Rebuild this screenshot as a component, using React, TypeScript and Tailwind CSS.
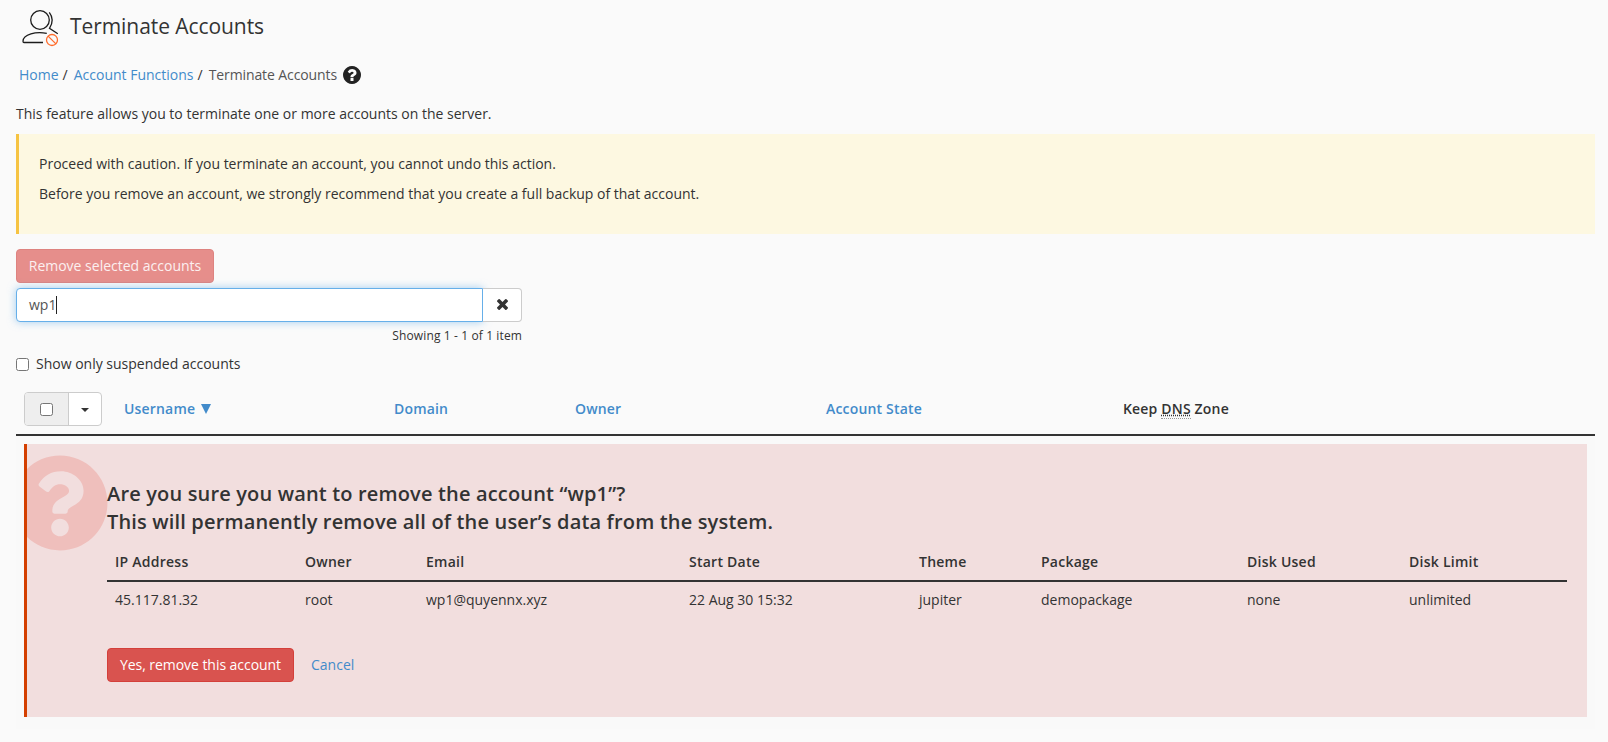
import React from "react";
import { FaQuestionCircle } from "react-icons/fa";

const columns = [
  { label: "IP Address", value: "45.117.81.32", width: "w-[190px]" },
  { label: "Owner", value: "root", width: "w-[121px]" },
  { label: "Email", value: "wp1@quyennx.xyz", width: "w-[263px]" },
  { label: "Start Date", value: "22 Aug 30 15:32", width: "w-[230px]" },
  { label: "Theme", value: "jupiter", width: "w-[122px]" },
  { label: "Package", value: "demopackage", width: "w-[206px]" },
  { label: "Disk Used", value: "none", width: "w-[162px]" },
  { label: "Disk Limit", value: "unlimited", width: "w-[150px]" },
];

function TerminateIcon() {
  return (
    <svg width="38" height="40" viewBox="0 0 38 40" fill="none" strokeWidth="1.3" stroke="#1c1c1c">
      <circle cx="18" cy="12" r="9.3" />
      <path d="M27.3 4.300c3.800 5 3.400 11 .2 16l8.300 5.400" />
      <path d="M24.800 25.300C14 23.300 1.200 26 1 33.200q0 1.300 1 1.300h19" />
      <g stroke="#ff6c2c" strokeWidth="1.3">
        <circle cx="30" cy="32" r="5.500" />
        <path d="M26.100 28.100l7.800 7.800" />
      </g>
    </svg>
  );
}

function HelpIcon() {
  return (
    <svg className="ml-[6px]" width="18" height="18" viewBox="0 128 1536 1536" fill="#222">
      <path d="M896 1376v-192q0-14-9-23t-23-9h-192q-14 0-23 9t-9 23v192q0 14 9 23t23 9h192q14 0 23-9t9-23zm256-672q0-88-55.5-163t-138.5-116-170-41q-243 0-371 213-15 24 8 42l132 100q7 6 19 6 16 0 25-12 53-68 86-92 34-24 86-24 48 0 85.500 26t37.500 59q0 38-20 61t-68 45q-63 28-115.500 86.500t-52.500 125.500v36q0 14 9 23t23 9h192q14 0 23-9t9-23q0-19 21.500-49.500t54.500-49.500q32-18 49-28.500t46-35 44.500-48 28-60.500 12.500-81zm384 192q0 209-103 385.500t-279.500 279.500-385.500 103-385.500-103-279.500-279.500-103-385.500 103-385.500 279.500-279.500 385.500-103 385.500 103 279.500 279.500 103 385.500z" />
    </svg>
  );
}

function CheckBox() {
  return <span className="block size-[13px] shrink-0 rounded-[2.5px] border border-[#767676] bg-white" />;
}

export default function App() {
  return (
    <div className="h-[742px] overflow-hidden bg-[#fafafa] pl-4 pr-[13px] font-['Open_Sans',sans-serif] text-[14px] leading-5 text-[#333]">
      <header className="flex h-[52px] items-start pl-[6px] pt-2">
        <TerminateIcon />
        <h1 className="ml-[10px] mt-[3px] text-[21px] leading-[30px] tracking-[-0.07px]">Terminate Accounts</h1>
      </header>

      <nav className="flex h-[46px] items-center pl-[3px]">
        <a className="text-[#428bca]">Home</a>
        <span className="ml-1">/</span>
        <a className="ml-[6px] text-[#428bca]">Account Functions</a>
        <span className="ml-1">/</span>
        <span className="ml-[6px] tracking-[-0.1px] text-[#555]">Terminate Accounts</span>
        <HelpIcon />
      </nav>

      <p className="mt-[6px] h-[30px]">This feature allows you to terminate one or more accounts on the server.</p>

      <div className="h-[100px] border-l-3 border-[#f6c342] bg-[#fdf8e1] pl-5 pt-5">
        <p>Proceed with caution. If you terminate an account, you cannot undo this action.</p>
        <p className="mt-[10px]">
          Before you remove an account, we strongly recommend that you create a full backup of that account.
        </p>
      </div>

      <button className="mt-[15px] block h-[34px] w-[198px] rounded border border-[#de8380] bg-[#e68e8b] text-center text-[#fcf0f0]">
        Remove selected accounts
      </button>

      <div className="mt-[5px] flex h-[34px] w-[506px]">
        <div className="flex w-[467px] items-center rounded-l border border-[#66afe9] bg-white pl-3 text-[#555] shadow-[0_0_8px_rgba(102,175,233,0.6)]">
          wp1
          <span className="h-[18px] w-px bg-[#222]" />
        </div>
        <button className="flex w-[39px] items-center justify-center rounded-r border border-l-0 border-[#ccc] bg-white">
          <svg className="-mt-[2px] ml-px" width="11" height="11" viewBox="110 366 1188 1188" fill="#333">
            <path d="M1298 1322q0 40-28 68l-136 136q-28 28-68 28t-68-28l-294-294-294 294q-28 28-68 28t-68-28l-136-136q-28-28-28-68t28-68l294-294-294-294q-28-28-28-68t28-68l136-136q28-28 68-28t68 28l294 294 294-294q28-28 68-28t68 28l136 136q28 28 28 68t-28 68l-294 294 294 294q28 28 28 68z" />
          </svg>
        </button>
      </div>
      <p className="mt-[5px] w-[506px] text-right text-[12px] leading-[18px] tracking-[0.12px]">
        Showing 1 - 1 of 1 item
      </p>

      <label className="mt-[9px] flex h-5 items-center gap-[7px]">
        <CheckBox />
        Show only suspended accounts
      </label>

      <div className="mt-[10px] flex h-[52px] items-center border-b-2 border-[#333] pl-2 font-semibold tracking-[0.18px] text-[#428bca]">
        <div className="flex h-[34px] w-[78px] overflow-hidden rounded border border-[#ccc] bg-white">
          <div className="flex w-[44px] items-center justify-center border-r border-[#ccc] bg-[#eee]">
            <CheckBox />
          </div>
          <div className="flex flex-1 items-center justify-center">
            <span className="mt-0.5 border-x-4 border-t-4 border-x-transparent border-t-[#333]" />
          </div>
        </div>
        <div className="ml-[22px] flex w-[270px] items-center gap-[6px]">
          Username
          <svg width="10" height="10" viewBox="0 0 10 10" fill="#428bca">
            <path d="M0 0h10L5 10z" />
          </svg>
        </div>
        <div className="w-[181px]">Domain</div>
        <div className="w-[251px]">Owner</div>
        <div className="w-[297px]">Account State</div>
        <div className="text-[#333]">
          Keep <abbr className="border-b border-dotted border-[#999] underline decoration-dotted">DNS</abbr> Zone
        </div>
      </div>

      <div className="h-[293px] bg-[#f9f9f9] px-2 pt-2">
        <section className="relative h-[273px] overflow-hidden border-l-3 border-[#d43f00] bg-[#f2dede] pl-20 pt-9">
          <FaQuestionCircle className="absolute left-[-16px] top-[10px] text-[98px] text-[#efbfbc]" />
          <h2 className="relative text-[20px] font-semibold leading-7 tracking-[0.16px]">
            Are you sure you want to remove the account “wp1”?
            <br />
            This will permanently remove all of the user’s data from the system.
          </h2>
          <div className="mt-2 w-[1460px]">
            <div className="flex h-[38px] border-b-2 border-[#333] pl-2 pt-2 font-semibold tracking-[0.25px] *:shrink-0">
              {columns.map((c) => (
                <div key={c.label} className={c.width}>
                  {c.label}
                </div>
              ))}
            </div>
            <div className="flex h-9 pl-2 pt-2 *:shrink-0">
              {columns.map((c) => (
                <div key={c.label} className={c.width}>
                  {c.value}
                </div>
              ))}
            </div>
          </div>
          <div className="mt-[30px] flex items-center">
            <button className="h-[34px] w-[187px] rounded border border-[#d43f3a] bg-[#d9534f] tracking-[-0.05px] text-white">
              Yes, remove this account
            </button>
            <a className="ml-[17px] text-[#428bca]">Cancel</a>
          </div>
        </section>
      </div>
    </div>
  );
}
